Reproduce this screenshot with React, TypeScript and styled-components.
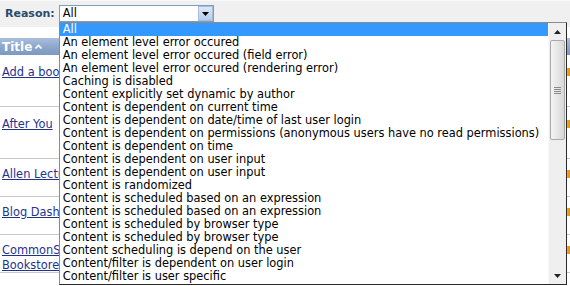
import React from "react";
import styled, { createGlobalStyle } from "styled-components";

const GlobalStyle = createGlobalStyle`
  html, body { margin: 0; padding: 0; background: #ffffff; overflow: hidden; }
  body { font-family: Verdana, "DejaVu Sans", sans-serif; font-size: 11px; }
`;

const Page = styled.div`
  width: 570px;
  height: 286px;
  position: relative;
  overflow: hidden;
  background: #ffffff;
`;

const FilterBar = styled.div`
  height: 27px;
  box-sizing: border-box;
  background: #f0f0f0;
  border-top: 1px solid #f8f8f8;
  display: flex;
  align-items: flex-start;
  padding: 4px 0 0 5px;
  gap: 4px;
`;

const Label = styled.label`
  font-weight: bold;
  font-size: 11px;
  color: #2b4a6e;
  line-height: 17px;
`;

const SelectWrap = styled.div`
  position: relative;
`;

const SelectBox = styled.div`
  width: 155px;
  height: 17px;
  box-sizing: border-box;
  border: 1px solid #7f9db9;
  background: #ffffff;
  display: flex;
  align-items: stretch;
`;

const SelectValue = styled.span`
  flex: 1;
  padding-left: 3px;
  line-height: 15px;
  color: #000000;
  font-size: 11.4px;
`;

const ArrowButton = styled.span`
  width: 15px;
  box-sizing: border-box;
  border: 1px solid #a7bcd9;
  background: linear-gradient(#dce8f8, #b8cdec);
  display: flex;
  align-items: center;
  justify-content: center;
`;

const DropdownList = styled.div`
  position: absolute;
  top: 17px;
  left: 0;
  width: 508px;
  height: 263px;
  box-sizing: border-box;
  border: 1px solid #8a8a8a;
  border-right-color: #2a2a2a;
  border-bottom-color: #2a2a2a;
  background: #ffffff;
  display: flex;
  z-index: 5;
`;

const Options = styled.ul`
  flex: 1;
  list-style: none;
  margin: 0;
  padding: 0;
  overflow: hidden;
`;

const Option = styled.li<{ $selected?: boolean }>`
  height: 13px;
  line-height: 13px;
  padding-left: 3px;
  white-space: nowrap;
  font-size: 11.4px;
  color: ${(p) => (p.$selected ? "#ffffff" : "#000000")};
  background: ${(p) => (p.$selected ? "#3399ff" : "transparent")};
`;

const ScrollBar = styled.div`
  width: 17px;
  background: #efefef;
  border-left: 1px solid #f8f8f8;
  display: flex;
  flex-direction: column;
  align-items: center;
`;

const ScrollArrow = styled.div`
  height: 17px;
  width: 100%;
  display: flex;
  align-items: center;
  justify-content: center;
`;

const Thumb = styled.div`
  width: 15px;
  height: 100px;
  box-sizing: border-box;
  border: 1px solid #a9a9a9;
  border-radius: 2px;
  background: linear-gradient(90deg, #f4f4f4, #e4e4e4 60%, #d6d6d6);
  display: flex;
  align-items: center;
  justify-content: center;
`;

const Grip = styled.div`
  display: flex;
  flex-direction: column;
  gap: 1px;
`;

const GripLine = styled.span`
  display: block;
  width: 7px;
  height: 1px;
  background: #8a8a8a;
`;

const Track = styled.div`
  flex: 1;
`;

const Table = styled.div`
  margin-top: 11px;
  width: 570px;
`;

const HeaderRow = styled.div`
  height: 17px;
  background: linear-gradient(#a9bfdc, #8ba6cb 55%, #7d99c0);
  display: flex;
  align-items: center;
  padding-left: 2px;
`;

const HeaderCell = styled.span`
  color: #ffffff;
  font-weight: bold;
  font-size: 12px;
  display: flex;
  align-items: center;
  gap: 3px;
`;

const Row = styled.div<{ $height: number }>`
  height: ${(p) => p.$height}px;
  box-sizing: border-box;
  border-bottom: 1px solid #c8c8c8;
  display: flex;
  justify-content: space-between;
  padding: ${(p) => (p.$height > 45 ? 10 : 8)}px 0 0 2px;
`;

const TitleLink = styled.a`
  color: #1f3290;
  text-decoration: underline;
  font-size: 11.4px;
  line-height: 15px;
  white-space: pre-line;
`;

const Marker = styled.span`
  width: 4px;
  height: 8px;
  margin-top: 3px;
  background: linear-gradient(90deg, #ffb040, #f08a00);
`;

const options = [
  "All",
  "An element level error occured",
  "An element level error occured (field error)",
  "An element level error occured (rendering error)",
  "Caching is disabled",
  "Content explicitly set dynamic by author",
  "Content is dependent on current time",
  "Content is dependent on date/time of last user login",
  "Content is dependent on permissions (anonymous users have no read permissions)",
  "Content is dependent on time",
  "Content is dependent on user input",
  "Content is dependent on user input",
  "Content is randomized",
  "Content is scheduled based on an expression",
  "Content is scheduled based on an expression",
  "Content is scheduled by browser type",
  "Content is scheduled by browser type",
  "Content scheduling is depend on the user",
  "Content/filter is dependent on user login",
  "Content/filter is user specific",
];

const rows = [
  { title: "Add a book review", h: 52 },
  { title: "After You", h: 52 },
  { title: "Allen Lecture", h: 38 },
  { title: "Blog Dashboard", h: 38 },
  { title: "CommonSpot\nBookstore", h: 38 },
];

export default function App() {
  return (
    <Page>
      <GlobalStyle />
      <FilterBar>
        <Label>Reason:</Label>
        <SelectWrap>
          <SelectBox>
            <SelectValue>All</SelectValue>
            <ArrowButton>
              <svg width="7" height="4" viewBox="0 0 7 4">
                <path d="M0 0H7L3.5 4Z" fill="#000" />
              </svg>
            </ArrowButton>
          </SelectBox>
          <DropdownList>
            <Options>
              {options.map((o, i) => (
                <Option key={i} $selected={i === 0}>
                  {o}
                </Option>
              ))}
            </Options>
            <ScrollBar>
              <ScrollArrow>
                <svg width="7" height="4" viewBox="0 0 7 4">
                  <path d="M3.5 0L7 4H0Z" fill="#222" />
                </svg>
              </ScrollArrow>
              <Thumb>
                <Grip>
                  <GripLine />
                  <GripLine />
                  <GripLine />
                  <GripLine />
                </Grip>
              </Thumb>
              <Track />
              <ScrollArrow>
                <svg width="7" height="4" viewBox="0 0 7 4">
                  <path d="M0 0H7L3.5 4Z" fill="#222" />
                </svg>
              </ScrollArrow>
            </ScrollBar>
          </DropdownList>
        </SelectWrap>
      </FilterBar>
      <Table>
        <HeaderRow>
          <HeaderCell>
            Title
            <svg width="7" height="5" viewBox="0 0 7 5">
              <path d="M0.5 4.5L3.5 1.5L6.5 4.5" stroke="#fff" strokeWidth="1.6" fill="none" />
            </svg>
          </HeaderCell>
        </HeaderRow>
        {rows.map((r, i) => (
          <Row key={i} $height={r.h}>
            <TitleLink href="#">{r.title}</TitleLink>
            <Marker />
          </Row>
        ))}
      </Table>
    </Page>
  );
}
